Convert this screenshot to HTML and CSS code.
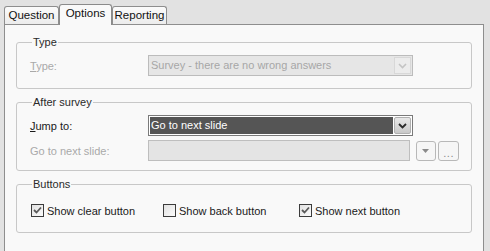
FILE: index.html
```html
<!DOCTYPE html>
<html>
<head>
<meta charset="utf-8">
<link rel="stylesheet" href="styles.css">
</head>
<body>
<div class="dialog">
  <div class="tabs">
    <div class="tab tab-q">Question</div>
    <div class="tab tab-o active">Options</div>
    <div class="tab tab-r">Reporting</div>
  </div>
  <div class="panel">
    <fieldset class="group g-type">
      <legend>Type</legend>
      <div class="row">
        <span class="lbl disabled"><u>T</u>ype:</span>
        <div class="combo combo-disabled">
          <span class="val">Survey - there are no wrong answers</span>
          <span class="drop drop-disabled"><svg width="9" height="6" viewBox="0 0 9 6"><path d="M1 1 L4.5 4.5 L8 1" fill="none" stroke="#c4c4c4" stroke-width="1.6"/></svg></span>
        </div>
      </div>
    </fieldset>
    <fieldset class="group g-after">
      <legend>After survey</legend>
      <div class="row">
        <span class="lbl"><u>J</u>ump to:</span>
        <div class="combo combo-active">
          <span class="val sel">Go to next slide</span>
          <span class="drop drop-active"><svg width="9" height="6" viewBox="0 0 9 6"><path d="M1 1 L4.5 4.5 L8 1" fill="none" stroke="#2a2a2a" stroke-width="1.8"/></svg></span>
        </div>
      </div>
      <div class="row row2">
        <span class="lbl disabled">Go to next slide:</span>
        <div class="textbox"></div>
        <div class="minibtn"><svg width="7" height="4" viewBox="0 0 7 4"><path d="M0 0 L7 0 L3.5 4 Z" fill="#8a8a8a"/></svg></div>
        <div class="minibtn dots">...</div>
      </div>
    </fieldset>
    <fieldset class="group g-buttons">
      <legend>Buttons</legend>
      <div class="checks">
        <div class="check"><span class="box"><svg width="9" height="9" viewBox="0 0 9 9"><path d="M1 4 L3.5 6.5 L8 1.5" fill="none" stroke="#5a5a5a" stroke-width="1.8"/></svg></span><span>Show clear button</span></div>
        <div class="check"><span class="box"></span><span>Show back button</span></div>
        <div class="check"><span class="box"><svg width="9" height="9" viewBox="0 0 9 9"><path d="M1 4 L3.5 6.5 L8 1.5" fill="none" stroke="#5a5a5a" stroke-width="1.8"/></svg></span><span>Show next button</span></div>
      </div>
    </fieldset>
  </div>
</div>
</body>
</html>
```

FILE: styles.css
```css
html, body {
  margin: 0;
  padding: 0;
}
body {
  width: 490px;
  height: 251px;
  overflow: hidden;
  background: #e2e2e2;
  font-family: "Liberation Sans", Arial, sans-serif;
  font-size: 11px;
  color: #1a1a1a;
}
.dialog {
  display: flex;
  flex-direction: column;
  height: 251px;
}
.tabs {
  display: flex;
  align-items: flex-end;
  height: 24px;
  padding-left: 4px;
}
.tab {
  box-sizing: border-box;
  height: 18px;
  border: 1px solid #8e8e8e;
  border-bottom: none;
  border-radius: 3px 3px 0 0;
  background: linear-gradient(#fbfbfb, #ececec);
  text-align: center;
  line-height: 16px;
  color: #111;
  font-size: 11.5px;
}
.tab-q { width: 55px; }
.tab-o { width: 53px; }
.tab-r { width: 55px; }
.tab.active {
  position: relative;
  z-index: 1;
  height: 21px;
  margin-bottom: -1px;
  background: #f9f9f9;
  line-height: 17px;
  border-color: #8a8a8a;
}
.panel {
  box-sizing: border-box;
  width: 480px;
  margin-left: 4px;
  flex: 1;
  border: 1px solid #8e8e8e;
  border-bottom: none;
  background: #f9f9f9;
  padding: 11px 11px 0 11px;
  display: flex;
  flex-direction: column;
}
.group {
  margin: 0;
  min-width: 0;
  border: 1px solid #c8c8c8;
  border-radius: 3px;
  padding: 6px 12px 12px 13px;
}
.group legend {
  padding: 0 1px;
  margin-left: 2px;
  line-height: 13px;
  color: #2a2a2a;
}
.g-after {
  margin-top: 7px;
  padding-bottom: 9px;
}
.g-buttons {
  margin-top: 7px;
  padding-top: 13px;
  padding-bottom: 15px;
}
.row {
  display: flex;
  align-items: center;
  height: 21px;
}
.row2 {
  margin-top: 4px;
}
.lbl {
  width: 118px;
  flex: none;
  color: #1a1a1a;
}
.lbl.disabled {
  color: #a9a9a9;
}
.combo {
  box-sizing: border-box;
  width: 265px;
  height: 21px;
  display: flex;
  align-items: stretch;
  border: 1px solid #bcbcbc;
}
.combo-disabled {
  background: #e6e6e6;
  color: #a6a6a6;
}
.combo .val {
  flex: 1;
  line-height: 19px;
  padding-left: 2px;
  white-space: nowrap;
  overflow: hidden;
}
.combo-active {
  border-color: #7a7a7a;
  background: #ffffff;
  padding: 1px;
}
.combo-active .val.sel {
  background: #555555;
  color: #ffffff;
  line-height: 17px;
  padding-left: 1px;
}
.drop {
  width: 17px;
  flex: none;
  display: flex;
  align-items: center;
  justify-content: center;
  box-sizing: border-box;
}
.drop-disabled {
  margin: 1px 1px 1px 0;
  border: 1px solid #d8d8d8;
  background: #ececec;
}
.drop-active {
  margin-left: 1px;
  border: 1px solid #b0b0b0;
  border-radius: 2px;
  background: linear-gradient(#e8e8e8, #c9c9c9);
}
.textbox {
  box-sizing: border-box;
  width: 265px;
  height: 21px;
  border: 1px solid #bebebe;
  background: #e4e4e4;
}
.minibtn {
  box-sizing: border-box;
  width: 21px;
  height: 20px;
  border: 1px solid #b8b8b8;
  border-radius: 3px;
  background: #f6f6f6;
  display: flex;
  align-items: center;
  justify-content: center;
  margin-left: 6px;
  color: #8a8a8a;
}
.minibtn.dots {
  margin-left: 2px;
  align-items: flex-end;
  line-height: 14px;
  letter-spacing: 0.5px;
}
.checks {
  display: grid;
  grid-template-columns: 132px 136px auto;
  margin-left: 1px;
}
.check {
  display: flex;
  align-items: center;
  height: 13px;
  gap: 3px;
  color: #1a1a1a;
}
.box {
  box-sizing: border-box;
  width: 13px;
  height: 13px;
  border: 1px solid #3c3c3c;
  background: linear-gradient(135deg, #e2e2e2, #fbfbfb);
  display: flex;
  align-items: center;
  justify-content: center;
  flex: none;
}
```
